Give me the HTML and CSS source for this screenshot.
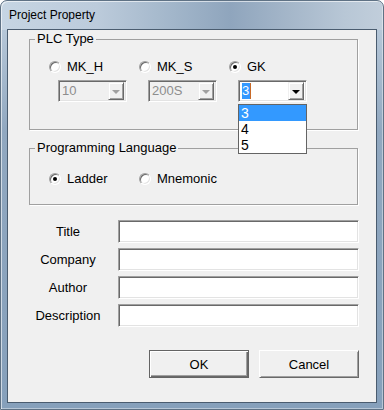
FILE: index.html
```html
<!DOCTYPE html>
<html lang="en">
<head>
  <meta charset="UTF-8" />
  <title>Project Property</title>
  <link rel="stylesheet" href="styles.css">
</head>
<body>
  <div class="window">
    <div class="titlebar">Project Property</div>

    <div class="client">
      <!-- PLC type: three options, each with its own combo -->
      <fieldset class="group plc">
        <legend>PLC Type</legend>
        <div class="options">
          <div class="option">
            <label class="radio"><span class="dot"></span>MK_H</label>
            <div class="combo disabled">
              <span class="value">10</span>
              <span class="drop"><span class="arrow"></span></span>
            </div>
          </div>
          <div class="option">
            <label class="radio"><span class="dot"></span>MK_S</label>
            <div class="combo disabled">
              <span class="value">200S</span>
              <span class="drop"><span class="arrow"></span></span>
            </div>
          </div>
          <div class="option">
            <label class="radio"><span class="dot checked"></span>GK</label>
            <div class="combo">
              <span class="value"><span class="sel">3</span><span class="caret"></span></span>
              <span class="drop"><span class="arrow"></span></span>
            </div>
            <ul class="droplist">
              <li class="hl">3</li>
              <li>4</li>
              <li>5</li>
            </ul>
          </div>
        </div>
      </fieldset>

      <fieldset class="group lang">
        <legend>Programming Language</legend>
        <div class="options">
          <div class="option">
            <label class="radio"><span class="dot checked"></span>Ladder</label>
          </div>
          <div class="option">
            <label class="radio"><span class="dot"></span>Mnemonic</label>
          </div>
        </div>
      </fieldset>

      <div class="fields">
        <label for="title">Title</label>
        <input type="text" id="title" />
        <label for="company">Company</label>
        <input type="text" id="company" />
        <label for="author">Author</label>
        <input type="text" id="author" />
        <label for="desc">Description</label>
        <input type="text" id="desc" />
      </div>

      <div class="buttons">
        <button type="button" class="default">OK</button>
        <button type="button">Cancel</button>
      </div>
    </div>
  </div>
</body>
</html>
```

FILE: styles.css
```css
body {
  margin: 0;
  font-family: "Liberation Sans", Arial, sans-serif;
  font-size: 13px;
  color: #000;
}

/* window frame */
.window {
  width: 384px;
  height: 410px;
  box-sizing: border-box;
  border: 1px solid #5f7285;
  border-radius: 7px 7px 0 0;
  padding: 0 6px 6px;
  box-shadow: inset 1px 1px rgba(255, 255, 255, 0.6), inset -1px -1px rgba(255, 255, 255, 0.4);
  background:
    linear-gradient(to right, #c6d5e3 0, #bccbdb 25%, #a2b6ca 45%, #8fa5bd 60%, #a4b6c9 75%, #b8c7d6 90%, #c1cedb 100%) top / 100% 29px no-repeat,
    linear-gradient(to bottom, #b6c7d8 29px, #91a8c0 130px, #86a0bb 100%);
}
.titlebar {
  height: 28px;
  line-height: 14px;
  padding: 7px 0 0 2px;
  box-sizing: border-box;
  font-size: 12px;
}

.client {
  width: 370px;
  height: 374px;
  box-sizing: border-box;
  border: 1px solid #4a5c6f;
  background: #f0f0f0;
  padding-top: 2px;
}

/* group boxes */
.group {
  margin: 0 0 0 21px;
  width: 329px;
  box-sizing: border-box;
  border: 1px solid #a0a0a0;
  box-shadow: 1px 1px 0 #fff;
  padding: 0 0 0 5px;
  min-width: 0;
}
.group legend {
  padding: 0 2px;
  line-height: 14px;
}
.group .options {
  display: flex;
  margin-left: 14px;
}
.option {
  width: 90px;
  position: relative;
}

.plc .options { padding-top: 14px; }
.plc { padding-bottom: 27px; }

.lang { margin-top: 11px; }
.lang .options { padding-top: 17px; }
.lang { padding-bottom: 18px; }

/* radio buttons */
.radio {
  display: flex;
  align-items: center;
  gap: 6px;
  height: 14px;
  line-height: 14px;
}
.dot {
  width: 12px;
  height: 12px;
  box-sizing: border-box;
  border-radius: 50%;
  border: 1px solid;
  border-color: #a0a0a0 #fff #fff #a0a0a0;
  box-shadow: inset 1px 1px #6a6a6a, inset -1px -1px #e3e3e3;
  background: #fff;
  display: flex;
  align-items: center;
  justify-content: center;
}
.dot.checked::after {
  content: "";
  width: 4px;
  height: 4px;
  border-radius: 50%;
  background: #000;
}

/* combo boxes */
.combo {
  margin: 6px 0 0 9px;
  width: 69px;
  height: 22px;
  box-sizing: border-box;
  border: 1px solid;
  border-color: #a0a0a0 #fff #fff #a0a0a0;
  box-shadow: inset 1px 1px #696969, inset -1px -1px #e3e3e3;
  background: #fff;
  display: flex;
  align-items: center;
  padding: 2px;
}
.combo .value {
  flex: 1;
  display: flex;
  align-items: center;
  padding-left: 1px;
  height: 16px;
  line-height: 16px;
}
.combo.disabled {
  background: #f0f0f0;
  color: #8d8d8d;
}
.sel {
  background: #3399ff;
  color: #fff;
  padding: 0 1px 0 0;
}
.caret {
  width: 1px;
  height: 16px;
  background: #c86a28;
}
.drop {
  width: 16px;
  height: 18px;
  box-sizing: border-box;
  border: 1px solid;
  border-color: #f0f0f0 #696969 #696969 #f0f0f0;
  box-shadow: inset 1px 1px #fff, inset -1px -1px #a0a0a0;
  background: #f0f0f0;
  display: flex;
  align-items: center;
  justify-content: center;
}
.arrow {
  width: 0;
  height: 0;
  border-left: 4px solid transparent;
  border-right: 4px solid transparent;
  border-top: 4px solid #000;
  margin-top: 1px;
}
.disabled .arrow {
  border-top-color: #a0a0a0;
}

/* opened list of the GK combo */
.droplist {
  position: absolute;
  left: 9px;
  top: 44px;
  width: 69px;
  box-sizing: border-box;
  margin: 0;
  padding: 0;
  list-style: none;
  border: 1px solid #646464;
  background: #fff;
  z-index: 2;
}
.droplist li {
  height: 16px;
  line-height: 16px;
  padding-left: 2px;
  font-size: 14px;
}
.droplist li.hl {
  background: #3399ff;
  color: #fff;
}

/* text fields */
.fields {
  display: grid;
  grid-template-columns: 78px 241px;
  column-gap: 11px;
  row-gap: 5px;
  margin: 15px 0 0 21px;
}
.fields label {
  text-align: center;
  line-height: 23px;
}
.fields input {
  height: 23px;
  box-sizing: border-box;
  margin: 0;
  border: 1px solid;
  border-color: #a0a0a0 #fff #fff #a0a0a0;
  box-shadow: inset 1px 1px #696969, inset -1px -1px #e3e3e3;
  background: #fff;
  font: inherit;
  outline: none;
}

/* dialog buttons */
.buttons {
  display: flex;
  justify-content: flex-end;
  gap: 10px;
  margin: 23px 17px 0 0;
}
.buttons button {
  width: 100px;
  height: 28px;
  font: inherit;
  color: #000;
  background: #f0f0f0;
  border: 1px solid;
  border-color: #fff #696969 #696969 #fff;
  box-shadow: inset 1px 1px #f0f0f0, inset -1px -1px #a0a0a0;
  padding: 0;
}
.buttons button.default {
  border-color: #646464;
  box-shadow: inset 1px 1px #fff, inset -1px -1px #696969, inset -2px -2px #a0a0a0;
}
```
